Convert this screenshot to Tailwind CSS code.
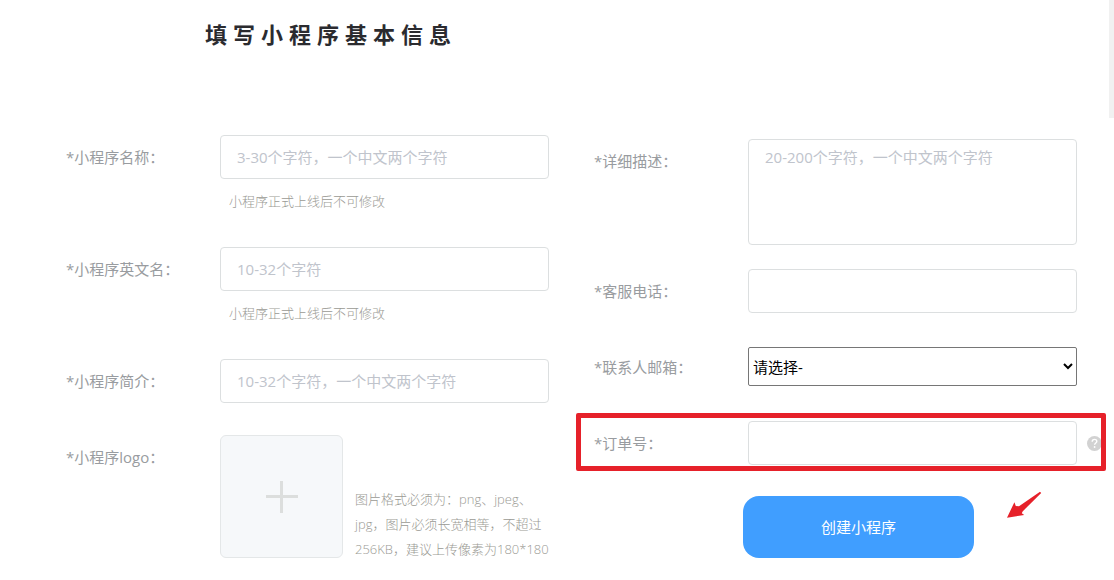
<!DOCTYPE html>
<html lang="zh-CN">
<head>
  <meta charset="UTF-8" />
  <meta name="viewport" content="width=device-width, initial-scale=1.0" />
  <title>填写小程序基本信息</title>
  <script src="https://cdn.jsdelivr.net/npm/@tailwindcss/browser@4"></script>
</head>
<body class="relative bg-white font-['Open_Sans','Noto_Sans_CJK_SC',sans-serif] text-[15px] leading-5 text-[#999ca0]">

  <!-- scroll track -->
  <div class="absolute top-0 right-0 w-[5px] h-[118px] bg-[#f1f1f1]"></div>

  <h1 class="pt-[18px] pl-[205px] text-[22px] leading-8 font-bold tracking-[6px] text-[#2b2b2f]">填写小程序基本信息</h1>

  <form id="appForm" class="grid grid-cols-2 gap-x-[45px] pt-[85px] pb-5 pl-[66px] pr-[37px]">

    <div>
      <div class="flex items-center">
        <label for="appName" class="w-[154px] shrink-0">*小程序名称：</label>
        <input id="appName" type="text" placeholder="3-30个字符，一个中文两个字符" class="flex-1 min-w-0 h-11 px-4 border border-[#dcdfe0] rounded text-black placeholder:text-[#c0c4cc]" />
      </div>
      <p class="h-[68px] pt-3 pl-[163px] text-[13px] font-light text-[#9a9a94]">小程序正式上线后不可修改</p>

      <div class="flex items-center">
        <label for="appEnName" class="w-[154px] shrink-0">*小程序英文名：</label>
        <input id="appEnName" type="text" placeholder="10-32个字符" class="flex-1 min-w-0 h-11 px-4 border border-[#dcdfe0] rounded text-black placeholder:text-[#c0c4cc]" />
      </div>
      <p class="h-[68px] pt-3 pl-[163px] text-[13px] font-light text-[#9a9a94]">小程序正式上线后不可修改</p>

      <div class="flex items-center mb-8">
        <label for="appIntro" class="w-[154px] shrink-0">*小程序简介：</label>
        <input id="appIntro" type="text" placeholder="10-32个字符，一个中文两个字符" class="flex-1 min-w-0 h-11 px-4 border border-[#dcdfe0] rounded text-black placeholder:text-[#c0c4cc]" />
      </div>

      <div class="flex">
        <label for="logoBtn" class="w-[154px] shrink-0 pt-3">*小程序logo：</label>
        <button id="logoBtn" type="button" aria-label="上传logo" class="flex items-center justify-center size-[123px] shrink-0 border border-[#e4e7e8] rounded-md bg-[#f6f8fa]">
          <svg class="size-8" viewBox="0 0 32 32" fill="none" stroke="#dcdedd" stroke-width="3">
            <path d="M15.5 0v32M0 15.5h32" />
          </svg>
        </button>
        <p class="self-end pl-3 text-[13px] leading-[25px] font-light text-[#9a9a94] whitespace-nowrap -mb-1">图片格式必须为：png、jpeg、<br />jpg，图片必须长宽相等，不超过<br />256KB，建议上传像素为180*180</p>
      </div>
    </div>

    <div class="pt-1">
      <div class="flex mb-6">
        <label for="appDesc" class="w-[154px] shrink-0 pt-3">*详细描述：</label>
        <textarea id="appDesc" placeholder="20-200个字符，一个中文两个字符" class="flex-1 min-w-0 h-[106px] px-4 py-[7px] border border-[#dcdfe0] rounded resize-none text-black placeholder:text-[#c0c4cc]"></textarea>
      </div>

      <div class="flex items-center mb-[34px]">
        <label for="phone" class="w-[154px] shrink-0">*客服电话：</label>
        <input id="phone" type="tel" class="flex-1 min-w-0 h-11 px-4 border border-[#dcdfe0] rounded text-black" />
      </div>

      <div class="flex items-center mb-[35px]">
        <label for="email" class="w-[154px] shrink-0">*联系人邮箱：</label>
        <select id="email" class="flex-1 min-w-0 h-[39px] border border-[#767676] rounded-xs bg-white text-black">
          <option>请选择-</option>
        </select>
      </div>

      <div class="relative flex items-center mb-[31px]">
        <label for="orderNo" class="w-[154px] shrink-0">*订单号：</label>
        <input id="orderNo" type="text" class="flex-1 min-w-0 h-11 px-4 border border-[#dcdfe0] rounded text-black" />
        <svg class="absolute -right-[25px] size-[15px]" viewBox="0 0 15 15">
          <circle cx="7.5" cy="7.5" r="7.5" fill="#d2d2d2" />
          <path d="M5.2 5.8c0-1.5 1-2.4 2.3-2.4s2.3.8 2.3 2c0 1.6-2.2 1.7-2.2 3.4" fill="none" stroke="#fff" stroke-width="1.4" />
          <circle cx="7.6" cy="11" r=".9" fill="#fff" />
        </svg>
        <!-- highlight frame -->
        <div class="absolute -top-2 -bottom-1.5 -left-[18px] -right-[29px] border-5 border-[#e6212a] rounded-xs pointer-events-none"></div>
      </div>

      <div class="flex items-start pl-[149px]">
        <button type="submit" class="w-[231px] h-[62px] shrink-0 rounded-2xl bg-[#409eff] text-white">创建小程序</button>
        <svg class="ml-[33px] -mt-1.5 w-[35px] h-[29px]" viewBox="0 0 35 29" fill="#e6212a">
          <path d="M0 27.7 7.4 12.2 8.8 16 12 16.2 33 1.8 34.2 3 15.6 21.4 14.8 23.2 17.2 25z" />
        </svg>
      </div>
    </div>
  </form>

</body>
</html>
